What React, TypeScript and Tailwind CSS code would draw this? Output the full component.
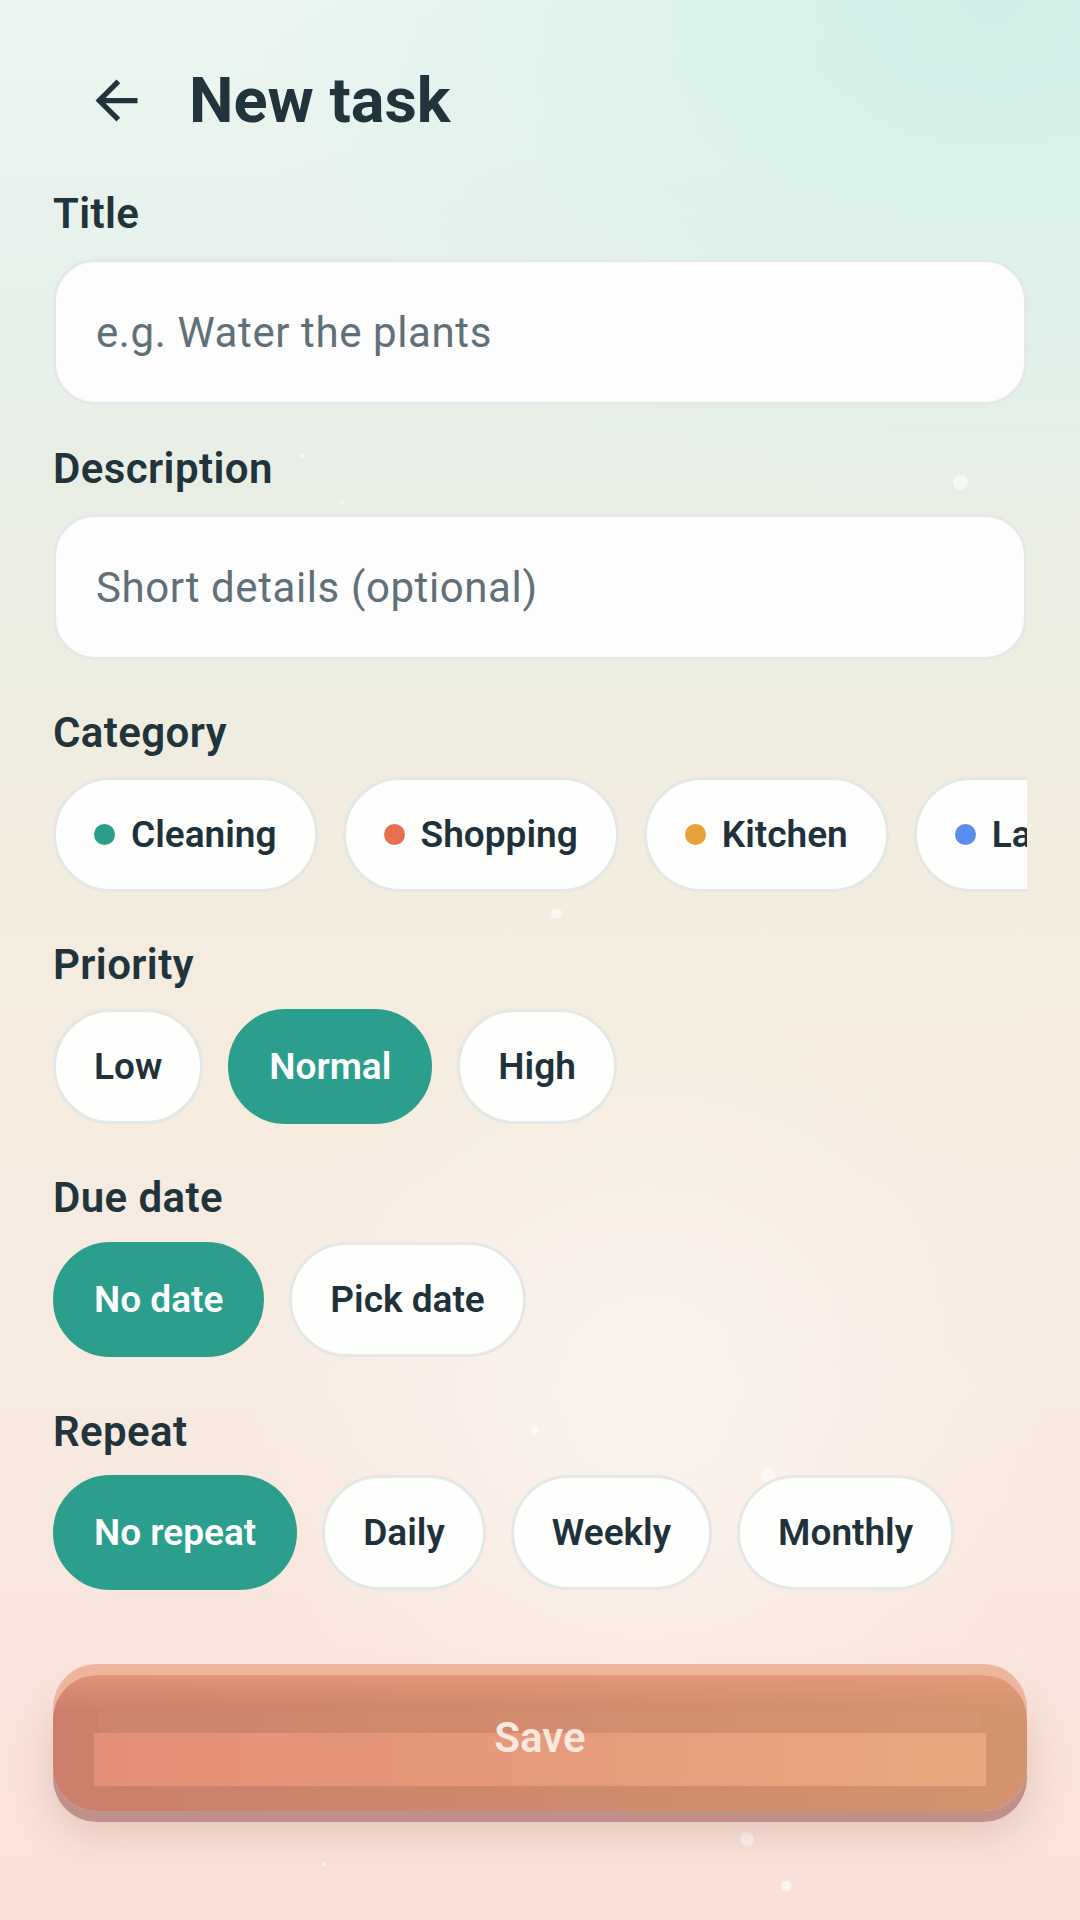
import React from 'react';

type ChipProps = { label: string; selected?: boolean; dot?: string };

const CATEGORIES = [
    { label: 'Cleaning', dot: '#2a9d8a' },
    { label: 'Shopping', dot: '#e76f51' },
    { label: 'Kitchen', dot: '#e9a23b' },
    { label: 'Laundry', dot: '#5b8def' },
];

// faint bokeh dots over the backdrop
const SPECKS = [
    { x: 960, y: 482, s: 15, o: 0.55 },
    { x: 302, y: 455, s: 5, o: 0.5 },
    { x: 342, y: 502, s: 4, o: 0.45 },
    { x: 556, y: 913, s: 11, o: 0.55 },
    { x: 535, y: 1430, s: 8, o: 0.5 },
    { x: 768, y: 1475, s: 15, o: 0.5 },
    { x: 747, y: 1839, s: 14, o: 0.6 },
    { x: 786, y: 1886, s: 10, o: 0.6 },
    { x: 324, y: 1864, s: 4, o: 0.5 },
];

const Chip = ({ label, selected, dot }: ChipProps) => (
    <div
        className={
            selected
                ? 'shrink-0 h-[115px] px-[38px] flex items-center gap-[16px] rounded-full bg-[#2b9e8d] border-[3px] border-[#2b9e8d] text-white'
                : 'shrink-0 h-[115px] px-[38px] flex items-center gap-[16px] rounded-full bg-[#fefefd] border-[3px] border-[#e3e8e6] text-[#1f323b]'
        }
    >
        {dot && <span className="w-[21px] h-[21px] rounded-full shrink-0" style={{ backgroundColor: dot }} />}
        <span className="text-[37px] font-semibold leading-none">{label}</span>
    </div>
);

const Label = ({ text, className }: { text: string; className: string }) => (
    <div className={`text-[42px] leading-[49px] font-semibold tracking-[0.4px] text-[#21333b] ${className}`}>{text}</div>
);

const Field = ({ placeholder, className }: { placeholder: string; className: string }) => (
    <div
        className={`h-[146px] rounded-[42px] border-[3px] border-[#e4e8e6] bg-[#fcfdfc] flex items-center px-[40px] ${className}`}
    >
        <span className="text-[42px] text-[#607079] tracking-[0.6px]">{placeholder}</span>
    </div>
);

export default function App() {
    return (
        <div className="relative w-[1080px] min-h-[1920px] overflow-hidden font-['Roboto',sans-serif] bg-[radial-gradient(ellipse_760px_520px_at_92%_0%,#d4efe9_0%,rgba(212,239,233,0)_100%),radial-gradient(circle_at_60%_73%,#fbf3ee_0%,rgba(251,243,238,0)_26%),linear-gradient(180deg,#ecf6f2_0%,#e6f0e9_18%,#ecede2_32%,#f1ecdf_42%,#f5ecdf_55%,#f7ebe2_70%,#f9e6de_86%,#fae2d9_100%)]">
            {SPECKS.map((p, i) => (
                <span
                    key={i}
                    className="absolute rounded-full bg-white"
                    style={{ left: p.x - p.s / 2, top: p.y - p.s / 2, width: p.s, height: p.s, opacity: p.o }}
                />
            ))}

            <div className="relative px-[53px] pb-[60px]">
                {/* Header */}
                <div className="pt-[69px] flex items-center h-[132px]">
                    <div className="ml-[32px] w-[63px] h-[63px] flex items-center justify-center">
                        <svg viewBox="0 0 24 24" width="63" height="63" fill="#21333b">
                            <path d="M20 11H7.83l5.59-5.59L12 4l-8 8 8 8 1.41-1.41L7.83 13H20v-2z" />
                        </svg>
                    </div>
                    <h1 className="ml-[41px] text-[63px] leading-[63px] font-bold text-[#21333b]">New task</h1>
                </div>

                <Label text="Title" className="mt-[57px]" />
                <Field placeholder="e.g. Water the plants" className="mt-[21px]" />

                <Label text="Description" className="mt-[39px]" />
                <Field placeholder="Short details (optional)" className="mt-[21px]" />

                <Label text="Category" className="mt-[48px]" />
                <div className="mt-[20px] flex gap-[25px] overflow-hidden">
                    {CATEGORIES.map(c => (
                        <Chip key={c.label} label={c.label} dot={c.dot} />
                    ))}
                </div>

                <Label text="Priority" className="mt-[48px]" />
                <div className="mt-[20px] flex gap-[25px]">
                    <Chip label="Low" />
                    <Chip label="Normal" selected />
                    <Chip label="High" />
                </div>

                <Label text="Due date" className="mt-[49px]" />
                <div className="mt-[20px] flex gap-[25px]">
                    <Chip label="No date" selected />
                    <Chip label="Pick date" />
                </div>

                <Label text="Repeat" className="mt-[50px]" />
                <div className="mt-[19px] flex gap-[25px]">
                    <Chip label="No repeat" selected />
                    <Chip label="Daily" />
                    <Chip label="Weekly" />
                    <Chip label="Monthly" />
                </div>

                {/* Save */}
                <div className="relative mt-[85px] h-[136px] rounded-[44px] bg-[linear-gradient(180deg,rgba(240,160,130,0.6)_0%,rgba(240,160,130,0)_26%),linear-gradient(90deg,#cb7e69_0%,#d08a6d_55%,#d3946f_100%)] shadow-[0_-11px_0_#edb59c,0_11px_0_#c0908a,0_22px_40px_rgba(160,100,80,0.25)]">
                    <div className="absolute left-[46px] right-[46px] top-[36px] h-[52px] bg-[rgba(255,190,160,0.07)]" />
                    <div className="absolute left-[41px] right-[41px] top-[58px] h-[53px] bg-[linear-gradient(90deg,#e58f78,#e69c7c_55%,#eaa880)]" />
                    <div className="absolute inset-x-0 top-[38px] text-center text-[42px] leading-[49px] font-semibold text-[#fbe8de]">
                        Save
                    </div>
                </div>
            </div>
        </div>
    );
}
